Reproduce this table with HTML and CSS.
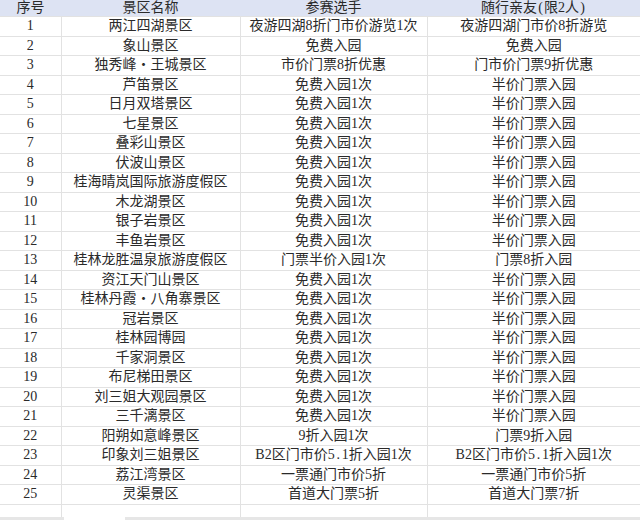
FILE: index.html
```html
<!DOCTYPE html>
<html lang="zh">
<head>
<meta charset="utf-8">
<link rel="stylesheet" href="styles.css">
</head>
<body>
<div class="sheet">
<table class="grid">
<colgroup><col class="c1"><col class="c2"><col class="c3"><col class="c4"></colgroup>
<thead>
<tr class="head"><th>序号</th><th>景区名称</th><th>参赛选手</th><th>随行亲友<span class="hw">(</span>限2人<span class="hw">)</span></th></tr>
</thead>
<tbody>
<tr><td>1</td><td>两江四湖景区</td><td>夜游四湖8折门市价游览1次</td><td>夜游四湖门市价8折游览</td></tr>
<tr><td>2</td><td>象山景区</td><td>免费入园</td><td>免费入园</td></tr>
<tr><td>3</td><td>独秀峰・王城景区</td><td>市价门票8折优惠</td><td>门市价门票9折优惠</td></tr>
<tr><td>4</td><td>芦笛景区</td><td>免费入园1次</td><td>半价门票入园</td></tr>
<tr><td>5</td><td>日月双塔景区</td><td>免费入园1次</td><td>半价门票入园</td></tr>
<tr><td>6</td><td>七星景区</td><td>免费入园1次</td><td>半价门票入园</td></tr>
<tr><td>7</td><td>叠彩山景区</td><td>免费入园1次</td><td>半价门票入园</td></tr>
<tr><td>8</td><td>伏波山景区</td><td>免费入园1次</td><td>半价门票入园</td></tr>
<tr><td>9</td><td>桂海晴岚国际旅游度假区</td><td>免费入园1次</td><td>半价门票入园</td></tr>
<tr><td>10</td><td>木龙湖景区</td><td>免费入园1次</td><td>半价门票入园</td></tr>
<tr><td>11</td><td>银子岩景区</td><td>免费入园1次</td><td>半价门票入园</td></tr>
<tr><td>12</td><td>丰鱼岩景区</td><td>免费入园1次</td><td>半价门票入园</td></tr>
<tr><td>13</td><td>桂林龙胜温泉旅游度假区</td><td>门票半价入园1次</td><td>门票8折入园</td></tr>
<tr><td>14</td><td>资江天门山景区</td><td>免费入园1次</td><td>半价门票入园</td></tr>
<tr><td>15</td><td>桂林丹霞・八角寨景区</td><td>免费入园1次</td><td>半价门票入园</td></tr>
<tr><td>16</td><td>冠岩景区</td><td>免费入园1次</td><td>半价门票入园</td></tr>
<tr><td>17</td><td>桂林园博园</td><td>免费入园1次</td><td>半价门票入园</td></tr>
<tr><td>18</td><td>千家洞景区</td><td>免费入园1次</td><td>半价门票入园</td></tr>
<tr><td>19</td><td>布尼梯田景区</td><td>免费入园1次</td><td>半价门票入园</td></tr>
<tr><td>20</td><td>刘三姐大观园景区</td><td>免费入园1次</td><td>半价门票入园</td></tr>
<tr><td>21</td><td>三千漓景区</td><td>免费入园1次</td><td>半价门票入园</td></tr>
<tr><td>22</td><td>阳朔如意峰景区</td><td>9折入园1次</td><td>门票9折入园</td></tr>
<tr><td>23</td><td>印象刘三姐景区</td><td>B2区门市价5<span class="hw">.</span>1折入园1次</td><td>B2区门市价5<span class="hw">.</span>1折入园1次</td></tr>
<tr><td>24</td><td>荔江湾景区</td><td>一票通门市价5折</td><td>一票通门市价5折</td></tr>
<tr><td>25</td><td>灵渠景区</td><td>首道大门票5折</td><td>首道大门票7折</td></tr>
<tr class="empty"><td></td><td></td><td></td><td></td></tr>
</tbody>
</table>
<div class="tabs"><div class="tab-a"></div><div class="tab-gap"></div><div class="tab-b"></div></div>
</div>
</body>
</html>
```
FILE: styles.css
```css
html, body {
  margin: 0;
  padding: 0;
  background: #ffffff;
}
.sheet {
  width: 640px;
  height: 520px;
  overflow: hidden;
  position: relative;
}
.grid {
  width: 640px;
  table-layout: fixed;
  border-collapse: collapse;
  font-family: "Liberation Serif", "Noto Sans CJK SC", serif;
  font-size: 14px;
  color: #2a2a2a;
}
.c1 { width: 61px; }
.c2 { width: 179px; }
.c3 { width: 187px; }
.c4 { width: 213px; }
.grid th {
  font-weight: normal;
  background: #dde3f3;
  height: 16px;
  padding: 0;
  line-height: 16px;
  border-bottom: 1px solid #e2e2e2;
  text-align: center;
  white-space: nowrap;
}
.grid td {
  height: 18.5px;
  padding: 0;
  line-height: 18px;
  text-align: center;
  white-space: nowrap;
  border-bottom: 1px solid #e2e2e2;
  border-right: 1px solid #e2e2e2;
}
.grid td:last-child {
  border-right: none;
}
.grid .empty td {
  height: 20px;
}
.hw {
  display: inline-block;
  width: 7px;
  line-height: 1;
  text-align: center;
}
.tabs {
  position: absolute;
  left: 0;
  bottom: 0;
  width: 640px;
  height: 3px;
  display: flex;
}
.tab-a {
  width: 64px;
  background: #e6e6e6;
}
.tab-gap {
  width: 61px;
  background: #ffffff;
}
.tab-b {
  flex: 1;
  background: #e6e6e6;
}
```
